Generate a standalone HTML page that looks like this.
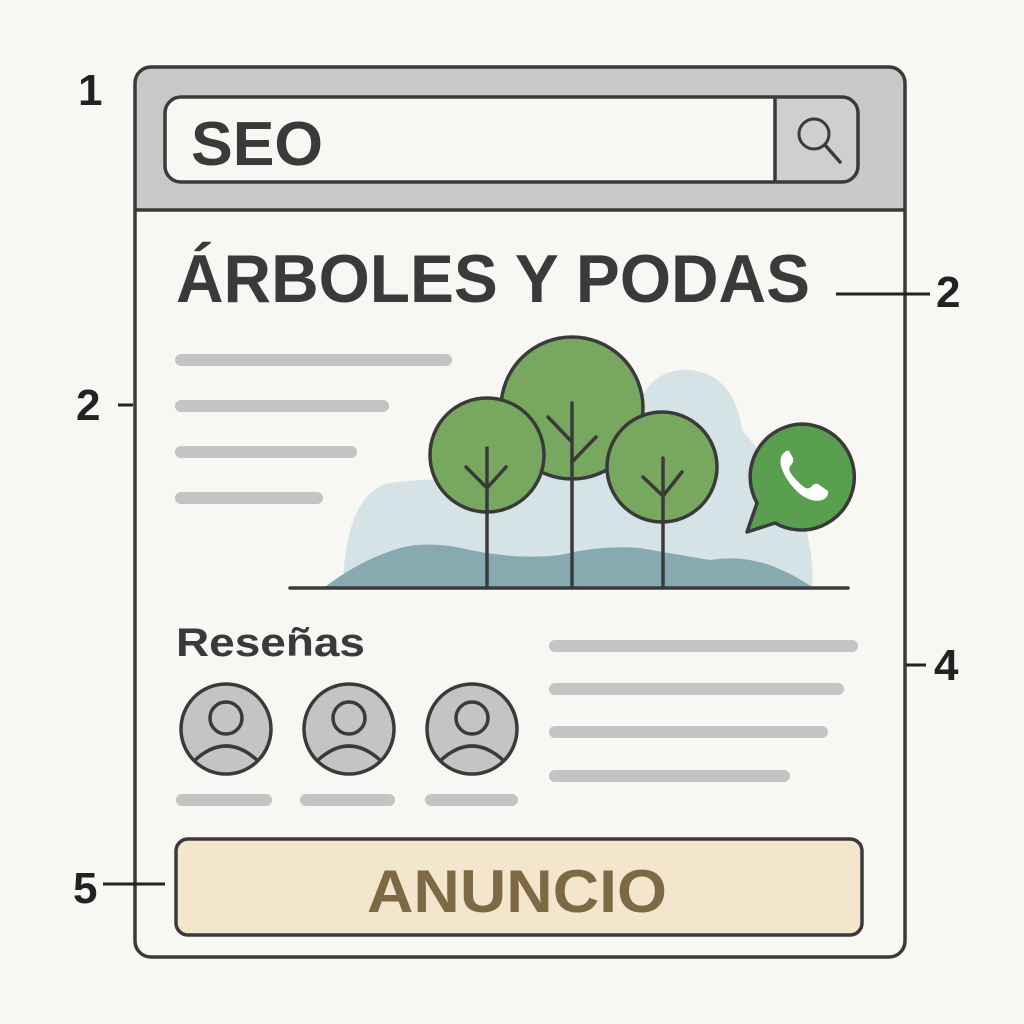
<!DOCTYPE html>
<html><head><meta charset="utf-8"><style>
html,body{margin:0;padding:0;background:#f9f7f3;}
svg{display:block}
text{font-family:"Liberation Sans",sans-serif;font-weight:bold;}
</style></head><body>
<svg width="1024" height="1024" viewBox="0 0 1024 1024" xmlns="http://www.w3.org/2000/svg">
<rect width="1024" height="1024" fill="#f9f7f3"/>
<path d="M135 210 V83 Q135 67 151 67 H889 Q905 67 905 83 V210 Z" fill="#c8c9c7"/>
<rect x="135" y="67" width="770" height="890" rx="16" fill="none" stroke="#3a3a3a" stroke-width="3.5"/>
<line x1="135" y1="210" x2="905" y2="210" stroke="#3a3a3a" stroke-width="3.5"/>
<rect x="165" y="97" width="693" height="85" rx="16" fill="#f9f7f3"/>
<path d="M775 97 H842 Q858 97 858 113 V166 Q858 182 842 182 H775 Z" fill="#cfd0ce"/>
<rect x="165" y="97" width="693" height="85" rx="16" fill="none" stroke="#3a3a3a" stroke-width="3.5"/>
<line x1="775" y1="97" x2="775" y2="182" stroke="#3a3a3a" stroke-width="3.5"/>
<circle cx="814" cy="134" r="15" fill="none" stroke="#3a3a3a" stroke-width="3"/>
<line x1="825" y1="145" x2="840" y2="162" stroke="#3a3a3a" stroke-width="3.5" stroke-linecap="round"/>
<text x="191" y="165" font-size="62" fill="#3a3a3a" textLength="132" lengthAdjust="spacingAndGlyphs">SEO</text>
<text x="176" y="302" font-size="68" fill="#3a3a3a" textLength="634" lengthAdjust="spacingAndGlyphs">ÁRBOLES Y PODAS</text>
<g stroke="#c4c4c4" stroke-width="12" stroke-linecap="round">
<line x1="181" y1="360" x2="446" y2="360"/>
<line x1="181" y1="406" x2="383" y2="406"/>
<line x1="181" y1="452" x2="351" y2="452"/>
<line x1="181" y1="498" x2="317" y2="498"/>
<line x1="555" y1="646" x2="852" y2="646"/>
<line x1="555" y1="689" x2="838" y2="689"/>
<line x1="555" y1="732" x2="822" y2="732"/>
<line x1="555" y1="776" x2="784" y2="776"/>
<line x1="182" y1="800" x2="266" y2="800"/>
<line x1="306" y1="800" x2="389" y2="800"/>
<line x1="431" y1="800" x2="512" y2="800"/>
</g>
<path d="M343 587 Q345 500 385 484 Q420 478 450 480 L640 400 Q655 368 690 370 Q735 375 742 430 L800 500 Q815 560 812 587 Z" fill="#d6e3e6"/>
<path d="M325 587 Q360 560 400 548 Q430 540 470 550 Q520 560 560 555 Q600 545 640 548 Q680 555 710 560 Q740 555 770 565 Q795 575 812 587 Z" fill="#87aab0"/>
<line x1="290" y1="588" x2="848" y2="588" stroke="#3a3a3a" stroke-width="3.5" stroke-linecap="round"/>
<g stroke="#3a3a3a" stroke-width="3.5" fill="#78a860" stroke-linecap="round" stroke-linejoin="round">
<circle cx="572" cy="408" r="71"/>
<circle cx="487" cy="455" r="57"/>
<circle cx="662" cy="467" r="55"/>
<g fill="none" stroke-width="3.5">
<line x1="487" y1="448" x2="487" y2="588"/>
<polyline points="466,467 487,488 506,467"/>
<line x1="572" y1="403" x2="572" y2="588"/>
<polyline points="548,417 572,442"/>
<polyline points="596,437 572,462"/>
<line x1="663" y1="458" x2="663" y2="588"/>
<polyline points="643,477 663,496 682,472"/>
</g>
</g>
<path d="M802 424 A53 53 0 1 1 775 523 L747 532 L757 503 A53 53 0 0 1 802 424 Z" fill="#5a9e50" stroke="#3a3a3a" stroke-width="3.5" stroke-linejoin="round"/>
<path d="M785 452 Q779 456 781 466 Q786 482 800 494 Q812 503 822 500 Q829 497 828 491 L818 484 Q814 483 811 487 Q808 490 804 487 Q795 480 790 472 Q788 468 791 465 Q794 462 793 458 L789 451 Q787 450 785 452 Z" fill="#fff"/>
<text x="176" y="656" font-size="40" fill="#3a3a3a" textLength="189" lengthAdjust="spacingAndGlyphs">Reseñas</text>
<g stroke="#3a3a3a" stroke-width="3.5" fill="#c4c4c4">
<g transform="translate(226 729)"><circle r="45"/><circle cy="-11" r="16" fill="none"/><path d="M-32 32 Q0 2 32 32" fill="none"/></g>
<g transform="translate(349 729)"><circle r="45"/><circle cy="-11" r="16" fill="none"/><path d="M-32 32 Q0 2 32 32" fill="none"/></g>
<g transform="translate(472 729)"><circle r="45"/><circle cy="-11" r="16" fill="none"/><path d="M-32 32 Q0 2 32 32" fill="none"/></g>
</g>
<rect x="176" y="839" width="686" height="96" rx="12" fill="#f3e6cc" stroke="#3a3a3a" stroke-width="3.5"/>
<text x="517" y="912" font-size="60" fill="#7d6a45" text-anchor="middle" textLength="300" lengthAdjust="spacingAndGlyphs">ANUNCIO</text>
<g fill="#222" font-size="44">
<text x="78" y="105">1</text>
<text x="76" y="420">2</text>
<text x="936" y="307">2</text>
<text x="934" y="680">4</text>
<text x="73" y="903">5</text>
</g>
<g stroke="#222" stroke-width="3">
<line x1="118" y1="405" x2="133" y2="405"/>
<line x1="836" y1="294" x2="930" y2="294"/>
<line x1="906" y1="665" x2="926" y2="665"/>
<line x1="103" y1="884" x2="165" y2="884"/>
</g>
</svg>
</body></html>
